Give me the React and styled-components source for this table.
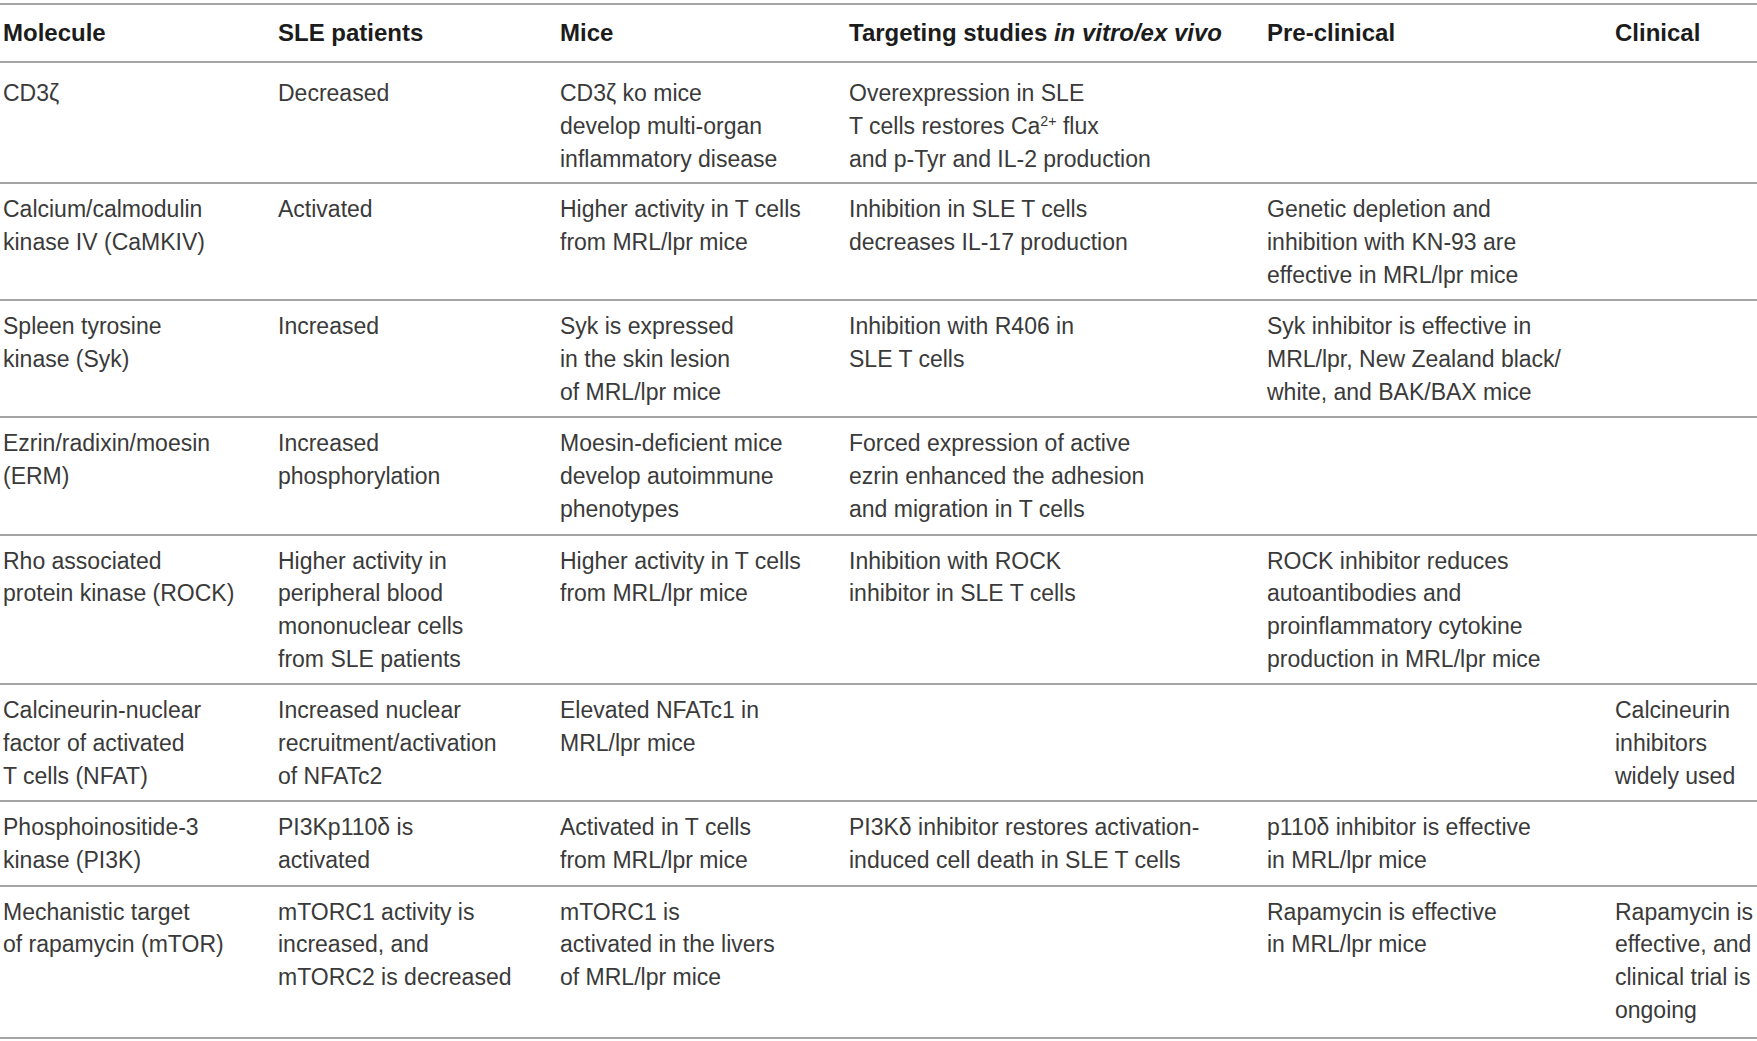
import React from "react"
import styled, { createGlobalStyle } from "styled-components"

const GlobalStyle = createGlobalStyle`
  html, body {
    margin: 0;
    padding: 0;
    background: #ffffff;
    overflow: hidden;
  }
`

const Page = styled.div`
  width: 1757px;
  padding-top: 3px;
`

const Table = styled.table`
  width: 1757px;
  table-layout: fixed;
  border-collapse: separate;
  border-spacing: 0;
  font-family: "Liberation Sans", Arial, sans-serif;
  color: #3a3a3a;
`

const Col = styled.col`
  width: ${p => p.$w}px;
`

const HeadCell = styled.th`
  text-align: left;
  vertical-align: top;
  font-size: 24px;
  font-weight: 700;
  line-height: 32.7px;
  padding: 12px 0 11.6px 3px;
  border-top: 2px solid #a4a4a4;
  border-bottom: 2px solid #a4a4a4;
  color: #1c1c1c;
  white-space: nowrap;

  em {
    font-style: italic;
  }
`

const Cell = styled.td`
  vertical-align: top;
  font-size: 23px;
  font-weight: 400;
  line-height: 32.7px;
  padding: ${p => p.$top}px 0 ${p => p.$bottom}px 3px;
  border-bottom: 2px solid #a4a4a4;
  white-space: nowrap;
`

const Line = styled.div`
  height: 32.7px;
`

const Sup = styled.sup`
  font-size: 0.62em;
  line-height: 0;
  vertical-align: 0.55em;
`

const widths = [275, 282, 289, 418, 348, 145]

const rows = [
  {
    top: 14, bottom: 7,
    cells: [
      ["CD3ζ"],
      ["Decreased"],
      ["CD3ζ ko mice", "develop multi-organ", "inflammatory disease"],
      ["Overexpression in SLE", <>T cells restores Ca<Sup>2+</Sup> flux</>, "and p-Tyr and IL-2 production"],
      [],
      [],
    ],
  },
  {
    top: 9, bottom: 8,
    cells: [
      ["Calcium/calmodulin", "kinase IV (CaMKIV)"],
      ["Activated"],
      ["Higher activity in T cells", "from MRL/lpr mice"],
      ["Inhibition in SLE T cells", "decreases IL-17 production"],
      ["Genetic depletion and", "inhibition with KN-93 are", "effective in MRL/lpr mice"],
      [],
    ],
  },
  {
    top: 9, bottom: 8,
    cells: [
      ["Spleen tyrosine", "kinase (Syk)"],
      ["Increased"],
      ["Syk is expressed", "in the skin lesion", "of MRL/lpr mice"],
      ["Inhibition with R406 in", "SLE T cells"],
      ["Syk inhibitor is effective in", "MRL/lpr, New Zealand black/", "white, and BAK/BAX mice"],
      [],
    ],
  },
  {
    top: 9, bottom: 8,
    cells: [
      ["Ezrin/radixin/moesin", "(ERM)"],
      ["Increased", "phosphorylation"],
      ["Moesin-deficient mice", "develop autoimmune", "phenotypes"],
      ["Forced expression of active", "ezrin enhanced the adhesion", "and migration in T cells"],
      [],
      [],
    ],
  },
  {
    top: 9, bottom: 8,
    cells: [
      ["Rho associated", "protein kinase (ROCK)"],
      ["Higher activity in", "peripheral blood", "mononuclear cells", "from SLE patients"],
      ["Higher activity in T cells", "from MRL/lpr mice"],
      ["Inhibition with ROCK", "inhibitor in SLE T cells"],
      ["ROCK inhibitor reduces", "autoantibodies and", "proinflammatory cytokine", "production in MRL/lpr mice"],
      [],
    ],
  },
  {
    top: 9, bottom: 8,
    cells: [
      ["Calcineurin-nuclear", "factor of activated", "T cells (NFAT)"],
      ["Increased nuclear", "recruitment/activation", "of NFATc2"],
      ["Elevated NFATc1 in", "MRL/lpr mice"],
      [],
      [],
      ["Calcineurin", "inhibitors", "widely used"],
    ],
  },
  {
    top: 9, bottom: 8,
    cells: [
      ["Phosphoinositide-3", "kinase (PI3K)"],
      ["PI3Kp110δ is", "activated"],
      ["Activated in T cells", "from MRL/lpr mice"],
      ["PI3Kδ inhibitor restores activation-", "induced cell death in SLE T cells"],
      ["p110δ inhibitor is effective", "in MRL/lpr mice"],
      [],
    ],
  },
  {
    top: 9, bottom: 11,
    cells: [
      ["Mechanistic target", "of rapamycin (mTOR)"],
      ["mTORC1 activity is", "increased, and", "mTORC2 is decreased"],
      ["mTORC1 is", "activated in the livers", "of MRL/lpr mice"],
      [],
      ["Rapamycin is effective", "in MRL/lpr mice"],
      ["Rapamycin is", "effective, and", "clinical trial is", "ongoing"],
    ],
  },
]

const App = () => {
  return (
    <Page>
      <GlobalStyle />
      <Table>
        <colgroup>
          {widths.map((w, i) => <Col key={i} $w={w} />)}
        </colgroup>
        <thead>
          <tr>
            <HeadCell>Molecule</HeadCell>
            <HeadCell>SLE patients</HeadCell>
            <HeadCell>Mice</HeadCell>
            <HeadCell>Targeting studies <em>in vitro/ex vivo</em></HeadCell>
            <HeadCell>Pre-clinical</HeadCell>
            <HeadCell>Clinical</HeadCell>
          </tr>
        </thead>
        <tbody>
          {rows.map((row, r) => (
            <tr key={r}>
              {row.cells.map((lines, c) => (
                <Cell key={c} $top={row.top} $bottom={row.bottom}>
                  {lines.map((l, k) => <Line key={k}>{l}</Line>)}
                </Cell>
              ))}
            </tr>
          ))}
        </tbody>
      </Table>
    </Page>
  )
}

export default App
